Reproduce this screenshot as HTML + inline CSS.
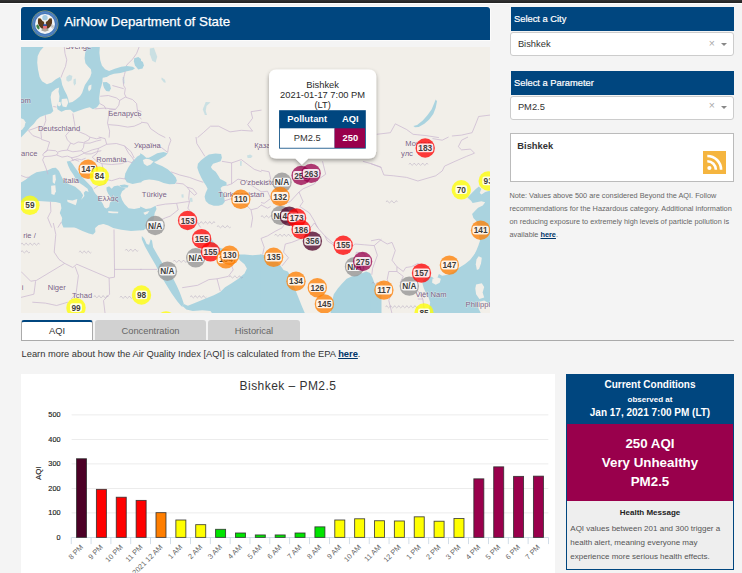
<!DOCTYPE html>
<html>
<head>
<meta charset="utf-8">
<title>AirNow Department of State</title>
<style>
*{box-sizing:border-box;margin:0;padding:0}
html,body{width:742px;height:573px;overflow:hidden}
body{background:#f4f4f4;font-family:"Liberation Sans",sans-serif;color:#333;position:relative}
.abs{position:absolute}
#topbar{left:0;top:0;width:742px;height:4px;background:#fff}
#topbar i{position:absolute;left:0;top:0;width:742px;height:2.7px;background:linear-gradient(#333,#222)}
#hdr{left:21.3px;top:7px;width:468.7px;height:33px;background:#00467f;border-radius:3px 3px 0 0;box-shadow:0 0 0 0.7px #fff}
#hdr .ttl{position:absolute;left:42.9px;top:6px;font-size:13.33px;color:#fff;white-space:nowrap;line-height:18px;-webkit-text-stroke:0.25px #fff}
#seal{left:9.5px;top:2.7px;width:28px;height:28px}
#map{left:21px;top:47px;width:469px;height:266px;background:#f2efe9;overflow:hidden}
.sbh{left:510.7px;width:222.9px;height:24.1px;-webkit-text-stroke:0.2px #fff;background:#00467f;color:#fff;font-size:9.33px;line-height:24px;padding-left:3.3px;white-space:nowrap}
.sel{left:510.3px;width:223.6px;height:24px;background:#fff;border:1px solid #ccc;border-radius:3px;font-size:9.33px;line-height:22px;padding-left:6.6px;color:#333}
.sel .x{position:absolute;left:197.5px;top:-1.5px;font-size:10.5px;color:#aaa}
.sel .ar{position:absolute;left:209.3px;top:9.5px;width:0;height:0;border-left:3px solid transparent;border-right:3px solid transparent;border-top:3px solid #888}
#citybox{left:510px;top:133px;width:224px;height:49px;background:#fff;border:1px solid #bbb}
#citybox b{position:absolute;left:6.3px;top:6px;font-size:9.33px;line-height:12px;color:#333}
#rss{left:703px;top:151px;width:23px;height:23px}
#note{left:509.5px;top:189px;width:230px;font-size:7.33px;line-height:13px;color:#666;white-space:nowrap}
#note a{color:#00366a;font-weight:bold;text-decoration:underline}
.tab{top:320px;height:21px;font-size:9.33px;line-height:23.4px;text-align:center;color:#666;background:#d1d1d1;border-radius:3px 3px 0 0}
#tab1{left:21px;width:72px;background:#fff;color:#333;border:1px solid #aaa;border-top:2px solid #00467f;border-bottom:none;line-height:19px}
#tab2{left:95px;width:111px}
#tab3{left:208px;width:92px}
#tabline{left:21px;top:340px;width:713px;height:1px;background:#aaa}
#learn{left:21.5px;top:348px;font-size:9.33px;line-height:12px;color:#333;white-space:nowrap}
#learn a{color:#00366a;font-weight:bold;text-decoration:underline}
#chart{left:21px;top:374px;width:534px;height:199px;background:#fff}
#cc{left:566px;top:374px;width:168px;height:196px;border:1px solid #00467f;background:#eee}
#cc .h{position:absolute;left:0;top:0;width:166px;height:49px;background:#00467f;color:#fff;text-align:center;font-weight:bold}
#cc .m{position:absolute;left:0;top:49px;width:166px;height:77px;background:#99004c;color:#fff;text-align:center;font-weight:bold;font-size:13.33px;line-height:19.2px;padding-top:9.7px}
#cc .hm{position:absolute;left:0;top:132.3px;width:166px;text-align:center;font-weight:bold;font-size:8px;line-height:12px;color:#222}
#cc .tx{position:absolute;left:3.3px;top:147px;font-size:8px;line-height:14px;color:#555;white-space:nowrap}
</style>
</head>
<body>
<div id="topbar" class="abs"><i></i></div>
<div id="hdr" class="abs">
  <svg id="seal" class="abs" viewBox="-14 -14 28 28">
    <g transform="scale(0.0628)">
    <circle r="214" fill="#a9ae60"/>
    <circle r="206" fill="#3f74b8"/>
    <circle r="183" fill="none" stroke="#8fb2dc" stroke-width="22" stroke-dasharray="8 8" opacity="0.5"/>
    <circle r="158" fill="#f3f5f7"/>
    <circle cx="0" cy="-100" r="43" fill="#a4cce3"/>
    <path d="M-12 -30 Q-40 -40 -70 -88 L-100 -96 Q-125 -60 -112 -10 Q-100 40 -60 68 L-26 80 L-14 40 Z" fill="#5b3b1d"/>
    <path d="M12 -30 Q40 -40 70 -88 L100 -96 Q125 -60 112 -10 Q100 40 60 68 L26 80 L14 40 Z" fill="#5b3b1d"/>
    <path d="M-80 -100 l10 22 l-22 -6 z M80 -100 l-10 22 l22 -6 z" fill="#d9c24c"/>
    <ellipse cx="0" cy="-40" rx="15" ry="20" fill="#f1efe8"/>
    <path d="M-45 70 L0 60 L45 70 L60 105 L0 125 L-60 105 Z" fill="#9a8c7e" opacity="0.75"/>
    <ellipse cx="-112" cy="48" rx="22" ry="40" transform="rotate(-25 -112 48)" fill="#3f8244"/>
    <path d="M95 15 L140 60 M105 5 L150 45 M88 28 L128 75" stroke="#999" stroke-width="10"/>
    <rect x="-29" y="4" width="58" height="27" fill="#2b4fa3"/>
    <path d="M-31 31 H31 V58 Q0 96 -31 58 Z" fill="#e86f7c"/>
    </g>
  </svg>
  <div class="ttl">AirNow Department of State</div>
</div>
<div id="map" class="abs">
<svg class="abs" style="left:0;top:0" width="469" height="266" viewBox="0 0 469 266" font-family="Liberation Sans, sans-serif">
<defs><filter id="bl" x="-2%" y="-2%" width="104%" height="104%"><feGaussianBlur stdDeviation="0.45"/></filter></defs><g filter="url(#bl)"><rect x="-5" y="-5" width="479" height="276" fill="#f2efe9"/>
<polygon points="0.0,0.0 22.6,0.0 19.1,4.0 16.7,8.9 16.2,15.4 17.0,22.6 18.6,29.9 21.0,34.3 25.9,37.2 30.7,35.6 34.8,32.3 38.8,29.9 40.1,32.3 41.2,38.0 43.3,42.9 45.8,47.7 47.2,51.8 48.0,55.8 51.4,55.0 55.0,52.6 59.0,49.3 61.1,46.1 62.3,42.4 63.9,38.0 66.6,34.0 69.2,29.9 70.5,25.9 69.9,22.3 67.1,19.4 64.4,16.2 63.6,11.3 64.2,5.7 66.0,0.0 78.8,0.0 78.4,5.7 79.2,12.9 80.9,18.6 84.1,22.3 88.1,23.9 93.8,21.8 100.3,19.7 105.9,19.1 111.6,19.7 114.0,21.3 111.6,23.0 105.9,24.3 99.5,25.9 93.0,26.7 88.6,28.3 85.7,29.9 82.2,31.5 81.4,34.8 80.5,38.8 79.2,42.4 78.8,46.1 78.1,51.8 78.8,56.6 76.0,60.2 72.0,62.3 68.7,60.2 63.9,61.5 58.2,63.4 52.6,65.5 49.3,62.8 44.5,63.1 40.4,64.7 36.4,62.3 35.9,58.2 38.0,54.2 38.5,49.3 37.5,44.5 38.2,40.4 34.8,41.7 30.7,45.3 29.6,50.1 30.4,55.8 31.5,60.7 32.3,63.9 29.9,66.6 24.3,67.9 19.1,69.9 15.8,72.8 12.9,76.8 8.9,80.5 7.3,82.8 4.5,85.7 1.9,88.6 -0.5,90.9 -0.8,86.5" fill="#aad3df"/>
<polygon points="81.7,35.3 85.7,34.9 89.0,37.5 89.9,41.4 88.3,44.6 85.2,44.0 83.1,41.1 82.2,38.2" fill="#aad3df"/>
<polygon points="113.2,11.3 117.3,10.0 120.0,12.1 120.0,21.8 117.3,22.6 114.0,18.6 112.9,14.6" fill="#aad3df"/>
<polygon points="45.3,29.9 48.5,27.8 51.4,29.1 50.5,33.2 47.2,34.8 45.3,33.2" fill="#aad3df" fill-opacity="0.55"/>
<polygon points="52.6,32.3 54.7,31.5 55.0,36.4 53.4,38.8 52.4,35.9" fill="#aad3df" fill-opacity="0.55"/>
<polygon points="101.6,29.9 103.2,29.9 103.7,36.4 101.9,36.4" fill="#aad3df" fill-opacity="0.55"/>
<polygon points="120.0,13.7 121.9,14.9 122.9,18.6 121.3,21.8 120.0,21.8" fill="#aad3df"/>
<polygon points="128.9,1.6 132.9,0.8 136.2,9.7 134.6,15.4 131.3,13.7 128.9,7.3" fill="#aad3df" fill-opacity="0.55"/>
<polygon points="140.7,30.4 143.9,32.7 144.9,35.6 143.0,35.6 140.4,32.3" fill="#aad3df" fill-opacity="0.55"/>
<polygon points="184.7,55.0 189.5,55.3 185.5,59.0 184.7,63.9 186.0,67.9 183.9,67.9 181.8,62.3" fill="#aad3df" fill-opacity="0.55"/>
<polygon points="392.4,78.9 396.1,78.0 401.8,73.6 406.6,67.9 410.7,62.3 413.4,55.8 414.7,52.6 416.0,54.2 414.7,60.7 412.3,67.1 408.2,72.5 403.4,76.8 397.7,80.1 394.0,80.2" fill="#aad3df"/>
<polygon points="-0.8,136.1 4.9,132.4 9.7,128.5 15.4,125.3 21.0,124.3 26.7,123.2 31.5,121.1 34.8,120.7 38.0,124.0 40.1,128.8 42.4,132.9 47.7,136.9 54.2,139.8 59.5,144.2 62.1,148.2 60.2,152.8 63.4,149.0 62.8,145.8 64.7,143.7 67.6,145.0 66.6,141.8 62.3,138.5 58.5,136.1 55.0,132.4 52.6,128.0 49.3,123.2 47.2,118.8 45.8,114.6 49.0,113.9 51.4,116.7 54.7,121.5 58.5,126.9 63.4,132.4 68.7,138.0 71.2,140.5 72.8,144.2 74.7,146.9 77.3,149.8 79.6,153.4 81.7,156.6 83.3,160.2 85.4,161.5 88.1,159.9 89.0,155.5 91.4,153.4 89.8,150.2 87.3,146.9 85.7,143.4 85.4,140.5 88.1,139.3 90.6,141.8 93.0,139.2 97.0,138.5 101.1,140.5 104.8,141.4 101.1,144.2 99.5,148.2 101.1,153.1 103.5,157.1 107.6,161.2 113.2,162.0 120.5,160.4 120.5,180.6 93.0,180.6 92.2,179.4 87.3,177.8 82.5,176.9 77.6,177.5 74.4,179.3 74.1,180.6 42.4,180.6 40.4,175.7 41.2,170.9 38.8,166.0 40.4,161.2 39.6,156.3 34.8,155.0 29.1,154.7 17.8,153.9 8.1,154.7 -0.8,155.5" fill="#aad3df"/>
<polygon points="120.5,107.0 116.4,109.4 111.6,114.3 107.6,119.9 104.3,126.4 103.5,131.2 105.9,135.3 111.6,136.9 116.4,136.1 120.5,135.3" fill="#aad3df"/>
<polygon points="98.3,138.2 103.5,137.5 107.6,138.5 106.7,140.5 101.1,140.8" fill="#aad3df"/>
<polygon points="119.2,106.2 121.9,107.8 125.2,110.7 127.8,110.7 131.3,109.1 136.2,106.2 142.6,104.9 146.7,106.2 144.3,109.1 139.4,111.8 135.4,114.3 132.9,115.1 135.4,116.7 141.0,119.1 146.7,122.3 151.5,126.4 154.8,130.4 155.9,133.7 154.0,136.9 148.3,137.2 142.6,136.1 137.8,134.0 132.9,132.9 128.1,132.4 123.2,133.3 119.2,135.3" fill="#aad3df"/>
<polygon points="183.9,110.2 187.9,107.5 194.4,106.5 200.1,107.0 200.9,110.7 199.6,114.3 196.0,115.6 192.0,116.7 189.9,119.9 191.2,122.3 194.7,124.8 197.3,128.8 199.2,132.1 201.7,133.3 205.4,135.3 205.7,138.5 201.7,139.3 199.6,140.9 200.5,144.2 202.5,146.6 203.3,150.7 203.8,154.7 201.7,157.6 197.6,158.7 192.8,158.7 187.9,157.1 184.7,153.9 183.6,149.8 184.7,145.8 186.6,141.8 185.0,138.5 182.8,135.3 180.2,130.4 177.9,125.6 176.3,120.7 176.9,116.7 179.8,113.5" fill="#aad3df"/>
<polygon points="225.9,108.6 229.2,107.5 231.6,109.1 230.0,111.0 226.7,111.0" fill="#aad3df" fill-opacity="0.55"/>
<polygon points="219.0,114.3 220.9,113.9 220.6,119.1 219.0,118.8" fill="#aad3df" fill-opacity="0.55"/>
<polygon points="119.2,159.5 124.9,162.0 129.7,161.2 134.6,158.7 135.5,162.0 133.7,166.0 132.9,170.9 132.1,175.7 131.3,180.6 119.2,180.6" fill="#aad3df"/>
<polygon points="168.5,151.1 171.1,150.8 171.8,154.4 169.5,155.3" fill="#aad3df" fill-opacity="0.55"/>
<polygon points="160.4,147.6 162.4,147.3 162.7,150.5 160.8,150.8" fill="#aad3df" fill-opacity="0.55"/>
<polygon points="470.5,143.2 464.2,145.1 460.6,147.6 458.7,145.9 460.3,142.0 457.9,139.6 454.8,142.0 450.1,146.7 446.4,150.6 450.1,153.8 451.6,156.1 455.5,155.3 460.3,154.2 464.2,155.3 461.8,158.5 457.1,160.8 453.2,164.8 451.1,167.1 452.4,171.0 455.5,174.2 457.1,179.7 457.9,189.1 459.0,193.8 457.4,198.5 455.5,203.2 453.2,208.0 451.1,211.1 470.5,211.1" fill="#aad3df"/>
<polygon points="42.4,175.2 48.5,177.6 55.0,180.9 61.5,184.1 67.9,186.5 72.0,187.6 74.4,184.9 74.1,180.9 77.6,177.9 82.5,176.8 87.3,178.4 92.2,180.9 100.3,182.8 110.0,184.1 120.5,183.3 120.5,175.2" fill="#aad3df"/>
<polygon points="120.8,188.9 123.2,191.4 125.7,197.0 128.1,197.8 129.7,192.2 131.0,193.5 132.1,200.3 136.2,207.5 141.0,215.6 145.9,222.9 151.5,230.2 155.9,239.1 158.8,245.5 161.2,252.0 162.9,256.9 160.4,259.3 156.4,254.4 150.7,246.4 145.1,237.5 139.4,227.8 134.6,218.1 128.9,208.3 124.0,199.5 120.8,192.2" fill="#aad3df"/>
<polygon points="160.4,259.3 162.9,256.9 166.9,258.8 175.0,255.6 184.7,251.5 192.8,248.3 199.2,245.1 204.1,240.2 210.6,236.2 217.0,232.1 223.5,226.5 225.9,221.6 223.5,217.2 219.0,213.5 217.0,210.8 217.8,207.5 223.5,207.5 231.6,208.3 240.5,207.5 240.5,266.6 191.2,266.6 189.5,264.1 181.5,263.3 171.8,264.1 165.3,262.5 162.4,259.8" fill="#aad3df"/>
<polygon points="183.9,184.9 188.7,189.7 192.8,195.4 197.6,200.3 204.1,202.7 210.6,205.1 215.4,207.5 213.0,210.0 207.3,212.4 200.9,210.8 196.0,208.3 193.6,204.3 189.5,198.6 185.5,193.0 183.1,188.1" fill="#aad3df"/>
<polygon points="119.2,175.2 126.5,175.2 125.7,180.9 122.4,183.3 119.2,183.3" fill="#aad3df"/>
<polygon points="239.2,207.5 244.9,208.3 249.7,210.8 256.2,214.8 259.7,218.9 262.6,222.9 266.7,224.5 269.9,229.4 272.3,237.5 274.8,243.9 278.0,252.0 281.2,260.1 284.0,266.6 239.2,266.6" fill="#aad3df"/>
<polygon points="309.5,266.6 309.9,262.5 311.2,253.6 312.8,247.2 316.8,241.5 320.9,236.7 325.7,231.8 330.6,229.4 335.4,228.1 340.3,226.5 345.1,224.5 349.2,226.1 351.6,231.0 353.5,236.2 356.4,240.7 360.5,245.5 360.5,266.6" fill="#aad3df"/>
<polygon points="470.5,185.7 464.8,188.9 461.6,194.6 458.0,200.6 453.8,207.1 449.0,212.9 444.1,217.1 438.5,220.5 432.8,224.5 426.3,227.8 421.2,228.7 417.9,226.9 416.6,230.2 413.9,232.0 410.7,229.7 405.8,230.3 402.1,233.4 401.4,236.2 402.7,241.0 405.0,245.9 407.6,250.7 409.2,255.6 408.2,260.4 406.6,266.6 470.5,266.6" fill="#aad3df"/>
<polygon points="349.2,248.0 352.4,250.4 355.7,253.6 356.5,258.5 354.9,263.3 354.0,266.6 349.2,266.6" fill="#aad3df"/>
<polygon points="0.0,71.2 2.9,72.5 4.5,75.2 3.6,79.2 1.3,82.5 0.0,83.3" fill="#f2efe9"/>
<polygon points="36.6,55.3 39.5,54.7 40.1,57.9 38.2,59.5 36.4,58.2" fill="#f2efe9"/>
<polygon points="40.8,52.1 46.1,51.4 47.2,55.8 45.3,60.2 41.7,59.5 40.4,55.8" fill="#f2efe9"/>
<polygon points="81.7,30.7 87.0,30.1 87.3,33.6 83.3,34.6 81.4,33.2" fill="#f2efe9"/>
<polygon points="67.6,38.8 70.5,37.5 70.2,42.1 67.9,44.5 67.0,41.7" fill="#f2efe9"/>
<polygon points="31.7,128.2 34.3,127.5 34.9,132.4 33.6,136.9 31.7,135.3" fill="#f2efe9"/>
<polygon points="30.1,138.8 34.3,138.2 34.9,144.2 33.3,147.9 30.4,146.9" fill="#f2efe9"/>
<polygon points="46.1,152.8 51.4,153.4 56.3,152.1 55.8,155.0 54.7,158.3 50.5,156.6 46.6,155.0" fill="#f2efe9"/>
<polygon points="87.3,164.1 92.2,164.4 97.4,164.7 97.0,166.3 91.4,166.3 87.3,165.7" fill="#f2efe9"/>
<polygon points="121.9,113.0 124.9,111.8 128.4,112.3 132.6,114.6 129.7,117.5 126.1,119.1 122.9,116.7" fill="#f2efe9"/>
<polygon points="122.3,165.7 125.7,164.4 128.4,164.1 126.8,166.3 124.0,168.0" fill="#f2efe9"/>
<polygon points="457.6,209.2 460.8,210.8 460.0,216.4 458.0,222.1 455.9,222.9 454.8,217.2 455.5,212.4" fill="#f2efe9"/>
<polygon points="411.5,231.8 416.3,230.2 419.9,231.8 418.7,235.8 414.7,237.8 411.1,235.8" fill="#f2efe9"/>
<polygon points="455.1,237.5 460.8,236.2 463.2,239.9 461.6,245.5 463.2,250.4 458.4,252.0 455.1,247.2 454.3,241.5" fill="#f2efe9"/>
<polygon points="456.7,255.2 463.2,253.6 468.9,256.9 470.5,266.6 460.0,266.6 457.6,261.7" fill="#f2efe9"/>
<polyline points="32.3,176.0 34.8,187.3 33.2,205.1 38.0,212.4 43.7,216.4 51.8,220.5 55.8,217.2 88.1,231.0 93.5,230.2 93.5,222.1 93.0,182.5" fill="none" stroke="#c9b5cf" stroke-width="0.9" stroke-opacity="0.8" stroke-linejoin="round"/>
<polyline points="43.7,216.4 15.4,233.4 9.7,234.2 0.0,224.5" fill="none" stroke="#c9b5cf" stroke-width="0.9" stroke-opacity="0.8" stroke-linejoin="round"/>
<polyline points="93.5,222.4 120.5,222.4" fill="none" stroke="#c9b5cf" stroke-width="0.9" stroke-opacity="0.8" stroke-linejoin="round"/>
<polyline points="54.2,219.7 57.4,228.6 55.0,247.2 50.1,252.0" fill="none" stroke="#c9b5cf" stroke-width="0.9" stroke-opacity="0.8" stroke-linejoin="round"/>
<polyline points="88.1,231.0 88.6,247.2 82.5,253.6 84.1,266.6" fill="none" stroke="#c9b5cf" stroke-width="0.9" stroke-opacity="0.8" stroke-linejoin="round"/>
<polyline points="0.0,250.4 12.9,247.2 14.6,234.2" fill="none" stroke="#c9b5cf" stroke-width="0.9" stroke-opacity="0.8" stroke-linejoin="round"/>
<polyline points="11.3,255.2 24.3,256.1 35.6,258.5 46.9,255.2" fill="none" stroke="#c9b5cf" stroke-width="0.9" stroke-opacity="0.8" stroke-linejoin="round"/>
<polyline points="161.2,240.7 176.6,238.3 187.9,232.6 196.0,231.8 207.3,229.4 212.2,222.9 209.8,216.4" fill="none" stroke="#c9b5cf" stroke-width="0.9" stroke-opacity="0.8" stroke-linejoin="round"/>
<polyline points="196.0,231.8 199.2,243.9" fill="none" stroke="#c9b5cf" stroke-width="0.9" stroke-opacity="0.8" stroke-linejoin="round"/>
<polyline points="119.2,222.4 136.2,222.4" fill="none" stroke="#c9b5cf" stroke-width="0.9" stroke-opacity="0.8" stroke-linejoin="round"/>
<polyline points="43.3,0.0 44.0,6.5 45.8,12.9 44.5,19.4 41.7,25.9 39.9,30.7" fill="none" stroke="#c9b5cf" stroke-width="0.9" stroke-opacity="0.8" stroke-linejoin="round"/>
<polyline points="118.1,0.0 115.6,6.5 111.6,12.1 106.7,17.0 105.1,19.1" fill="none" stroke="#c9b5cf" stroke-width="0.9" stroke-opacity="0.8" stroke-linejoin="round"/>
<polyline points="104.3,24.3 103.5,27.5 102.2,32.3 102.7,38.8 104.3,41.2 103.5,46.9 105.1,50.1" fill="none" stroke="#c9b5cf" stroke-width="0.9" stroke-opacity="0.8" stroke-linejoin="round"/>
<polyline points="91.4,38.5 97.0,40.1 102.7,41.7" fill="none" stroke="#c9b5cf" stroke-width="0.9" stroke-opacity="0.8" stroke-linejoin="round"/>
<polyline points="79.2,49.3 87.3,48.5 95.4,50.9 98.7,53.4 104.3,50.1 111.6,52.6 115.6,56.6 116.4,63.1 120.5,64.7" fill="none" stroke="#c9b5cf" stroke-width="0.9" stroke-opacity="0.8" stroke-linejoin="round"/>
<polyline points="98.7,53.4 97.8,58.2 94.6,62.3" fill="none" stroke="#c9b5cf" stroke-width="0.9" stroke-opacity="0.8" stroke-linejoin="round"/>
<polyline points="73.6,61.9 84.1,61.1 94.6,62.3 88.1,63.1 87.3,71.2 86.5,76.0 88.6,84.1 88.1,90.6" fill="none" stroke="#c9b5cf" stroke-width="0.9" stroke-opacity="0.8" stroke-linejoin="round"/>
<polyline points="78.8,56.6 83.3,59.0 84.9,62.3" fill="none" stroke="#c9b5cf" stroke-width="0.9" stroke-opacity="0.8" stroke-linejoin="round"/>
<polyline points="87.3,77.6 97.0,78.4 106.7,80.1 113.2,79.2 120.5,76.0" fill="none" stroke="#c9b5cf" stroke-width="0.9" stroke-opacity="0.8" stroke-linejoin="round"/>
<polyline points="116.4,63.1 117.3,69.5 120.5,72.0" fill="none" stroke="#c9b5cf" stroke-width="0.9" stroke-opacity="0.8" stroke-linejoin="round"/>
<polyline points="120.0,75.2 126.5,76.0 129.7,81.7 137.8,87.3 144.3,90.6" fill="none" stroke="#c9b5cf" stroke-width="0.9" stroke-opacity="0.8" stroke-linejoin="round"/>
<polyline points="176.6,90.6 182.3,85.7 189.5,79.2 197.6,79.2 209.0,84.9 220.3,83.3 231.6,84.1 226.7,77.6 231.6,71.2 230.0,64.7 240.5,63.1" fill="none" stroke="#c9b5cf" stroke-width="0.9" stroke-opacity="0.8" stroke-linejoin="round"/>
<polyline points="355.7,87.3 369.4,85.7 374.3,76.8 385.6,82.5 392.1,87.3 405.0,88.6 417.9,90.6" fill="none" stroke="#c9b5cf" stroke-width="0.9" stroke-opacity="0.8" stroke-linejoin="round"/>
<polyline points="470.5,67.9 457.6,69.5 455.1,76.0 451.1,85.7 440.6,88.1 430.9,89.0" fill="none" stroke="#c9b5cf" stroke-width="0.9" stroke-opacity="0.8" stroke-linejoin="round"/>
<polyline points="0.0,128.5 4.9,130.4 8.9,130.1" fill="none" stroke="#c9b5cf" stroke-width="0.9" stroke-opacity="0.8" stroke-linejoin="round"/>
<polyline points="50.1,111.0 56.6,109.4 63.1,106.2 71.2,102.9 77.6,101.3 76.0,106.2 71.2,110.2 76.0,114.3 80.9,116.7 90.6,117.5 100.3,116.7 106.7,114.3 111.6,115.9" fill="none" stroke="#c9b5cf" stroke-width="0.9" stroke-opacity="0.8" stroke-linejoin="round"/>
<polyline points="49.3,114.3 53.4,112.6 58.2,114.3" fill="none" stroke="#c9b5cf" stroke-width="0.9" stroke-opacity="0.8" stroke-linejoin="round"/>
<polyline points="77.6,101.3 85.7,97.3 95.4,96.5 103.5,98.9 107.6,106.2 111.6,111.0 113.2,114.3" fill="none" stroke="#c9b5cf" stroke-width="0.9" stroke-opacity="0.8" stroke-linejoin="round"/>
<polyline points="103.5,98.9 110.0,104.6 113.2,111.0" fill="none" stroke="#c9b5cf" stroke-width="0.9" stroke-opacity="0.8" stroke-linejoin="round"/>
<polyline points="85.7,97.3 84.1,91.6 77.6,90.0" fill="none" stroke="#c9b5cf" stroke-width="0.9" stroke-opacity="0.8" stroke-linejoin="round"/>
<polyline points="80.9,116.7 82.5,124.0 84.1,132.1 90.6,133.7 98.7,131.2 105.1,132.1" fill="none" stroke="#c9b5cf" stroke-width="0.9" stroke-opacity="0.8" stroke-linejoin="round"/>
<polyline points="72.8,141.8 77.6,138.5 84.1,136.9 84.1,132.1" fill="none" stroke="#c9b5cf" stroke-width="0.9" stroke-opacity="0.8" stroke-linejoin="round"/>
<polyline points="29.4,154.7 29.9,164.4 26.7,170.9 30.7,180.6" fill="none" stroke="#c9b5cf" stroke-width="0.9" stroke-opacity="0.8" stroke-linejoin="round"/>
<polyline points="40.4,174.9 36.9,180.6" fill="none" stroke="#c9b5cf" stroke-width="0.9" stroke-opacity="0.8" stroke-linejoin="round"/>
<polyline points="146.7,105.4 147.5,99.7 149.9,93.2 148.3,90.0" fill="none" stroke="#c9b5cf" stroke-width="0.9" stroke-opacity="0.8" stroke-linejoin="round"/>
<polyline points="149.9,124.8 158.8,128.0 168.5,130.4 175.0,132.9 182.3,135.3" fill="none" stroke="#c9b5cf" stroke-width="0.9" stroke-opacity="0.8" stroke-linejoin="round"/>
<polyline points="154.8,136.1 162.1,136.9 166.1,140.1 168.5,143.4 167.7,151.5 168.5,154.7 166.9,161.2 171.8,167.6 175.0,174.1 179.8,180.6" fill="none" stroke="#c9b5cf" stroke-width="0.9" stroke-opacity="0.8" stroke-linejoin="round"/>
<polyline points="166.1,140.1 171.8,141.8 175.8,146.6 173.4,148.2 168.5,143.4" fill="none" stroke="#c9b5cf" stroke-width="0.9" stroke-opacity="0.8" stroke-linejoin="round"/>
<polyline points="135.4,158.7 144.3,157.1 155.6,156.3 166.1,154.7 168.5,154.7" fill="none" stroke="#c9b5cf" stroke-width="0.9" stroke-opacity="0.8" stroke-linejoin="round"/>
<polyline points="155.6,156.3 157.2,162.8 149.1,169.2 144.3,170.9 137.8,174.1" fill="none" stroke="#c9b5cf" stroke-width="0.9" stroke-opacity="0.8" stroke-linejoin="round"/>
<polyline points="175.0,90.0 175.8,96.5 179.8,102.9 183.9,109.4" fill="none" stroke="#c9b5cf" stroke-width="0.9" stroke-opacity="0.8" stroke-linejoin="round"/>
<polyline points="200.9,114.3 210.6,115.9 220.3,112.6 233.2,122.3 240.5,124.8" fill="none" stroke="#c9b5cf" stroke-width="0.9" stroke-opacity="0.8" stroke-linejoin="round"/>
<polyline points="210.6,115.9 210.6,136.9 205.7,138.5" fill="none" stroke="#c9b5cf" stroke-width="0.9" stroke-opacity="0.8" stroke-linejoin="round"/>
<polyline points="210.6,136.9 217.0,132.1 223.5,133.7 233.2,140.1 240.5,145.0" fill="none" stroke="#c9b5cf" stroke-width="0.9" stroke-opacity="0.8" stroke-linejoin="round"/>
<polyline points="203.3,153.9 210.6,151.5 218.7,154.7 226.7,159.5 230.0,162.8 231.6,170.9 230.0,180.6" fill="none" stroke="#c9b5cf" stroke-width="0.9" stroke-opacity="0.8" stroke-linejoin="round"/>
<polyline points="230.0,162.8 236.4,161.2 240.5,157.9" fill="none" stroke="#c9b5cf" stroke-width="0.9" stroke-opacity="0.8" stroke-linejoin="round"/>
<polyline points="120.0,99.7 126.5,101.3 132.9,98.1 139.4,99.7 146.7,105.4" fill="none" stroke="#c9b5cf" stroke-width="0.9" stroke-opacity="0.8" stroke-linejoin="round"/>
<polyline points="240.0,123.2 248.1,124.8 249.7,132.1 243.2,136.1 240.0,136.9" fill="none" stroke="#c9b5cf" stroke-width="0.9" stroke-opacity="0.8" stroke-linejoin="round"/>
<polyline points="301.5,114.3 304.7,127.2 296.6,132.9 293.4,136.9 282.1,141.8 278.0,145.0 282.1,154.7 278.8,159.5 288.5,166.0 293.4,174.1 296.6,180.6" fill="none" stroke="#c9b5cf" stroke-width="0.9" stroke-opacity="0.8" stroke-linejoin="round"/>
<polyline points="240.0,145.0 246.5,144.2 249.7,151.5 243.2,156.3 240.0,155.5" fill="none" stroke="#c9b5cf" stroke-width="0.9" stroke-opacity="0.8" stroke-linejoin="round"/>
<polyline points="249.7,151.5 259.4,157.9 269.1,154.7 278.0,145.0" fill="none" stroke="#c9b5cf" stroke-width="0.9" stroke-opacity="0.8" stroke-linejoin="round"/>
<polyline points="341.9,114.3 350.0,116.7 360.5,120.7" fill="none" stroke="#c9b5cf" stroke-width="0.9" stroke-opacity="0.8" stroke-linejoin="round"/>
<polyline points="240.0,157.9 246.5,161.2 249.7,159.5" fill="none" stroke="#c9b5cf" stroke-width="0.9" stroke-opacity="0.8" stroke-linejoin="round"/>
<polyline points="350.0,116.7 359.7,119.9 362.9,128.0 372.6,128.8 385.6,130.4 396.9,134.0 414.7,128.8 421.2,124.0 423.6,119.1 434.1,114.3 445.4,109.4 453.5,106.2 449.5,102.1 440.6,102.9 437.3,99.7 440.6,93.2 447.0,90.0" fill="none" stroke="#c9b5cf" stroke-width="0.9" stroke-opacity="0.8" stroke-linejoin="round"/>
<polyline points="411.5,91.6 421.2,93.2 427.6,90.0" fill="none" stroke="#c9b5cf" stroke-width="0.9" stroke-opacity="0.8" stroke-linejoin="round"/>
<polyline points="278.8,192.2 270.7,195.4 264.3,197.0 262.6,205.1 267.5,210.8 261.0,218.9" fill="none" stroke="#c9b5cf" stroke-width="0.9" stroke-opacity="0.8" stroke-linejoin="round"/>
<polyline points="240.0,191.4 246.5,188.9 254.6,184.1 261.0,180.9 264.3,176.0" fill="none" stroke="#c9b5cf" stroke-width="0.9" stroke-opacity="0.8" stroke-linejoin="round"/>
<polyline points="240.0,191.4 243.2,200.3 241.6,207.5" fill="none" stroke="#c9b5cf" stroke-width="0.9" stroke-opacity="0.8" stroke-linejoin="round"/>
<polyline points="293.4,176.0 298.2,182.5 303.9,188.9 311.2,195.4 320.9,199.5 330.6,200.3 333.8,197.0 343.5,197.8 353.2,198.6 360.5,192.2" fill="none" stroke="#c9b5cf" stroke-width="0.9" stroke-opacity="0.8" stroke-linejoin="round"/>
<polyline points="303.9,188.9 306.3,193.8 316.0,200.3 327.3,204.3 330.6,200.3" fill="none" stroke="#c9b5cf" stroke-width="0.9" stroke-opacity="0.8" stroke-linejoin="round"/>
<polyline points="335.4,205.1 343.5,206.7 345.1,213.2 343.5,222.9" fill="none" stroke="#c9b5cf" stroke-width="0.9" stroke-opacity="0.8" stroke-linejoin="round"/>
<polyline points="335.4,205.1 333.8,214.8 337.0,224.5" fill="none" stroke="#c9b5cf" stroke-width="0.9" stroke-opacity="0.8" stroke-linejoin="round"/>
<polyline points="353.2,198.6 356.4,208.3 351.6,221.3 350.8,227.8" fill="none" stroke="#c9b5cf" stroke-width="0.9" stroke-opacity="0.8" stroke-linejoin="round"/>
<polyline points="278.8,192.2 285.3,185.7 293.4,176.0" fill="none" stroke="#c9b5cf" stroke-width="0.9" stroke-opacity="0.8" stroke-linejoin="round"/>
<polyline points="350.0,193.8 358.1,192.2 366.2,197.0 371.0,195.4 374.3,203.5 371.0,213.2 375.9,219.7 382.3,224.5 384.8,220.5 390.4,219.7 396.9,216.4 403.4,219.7" fill="none" stroke="#c9b5cf" stroke-width="0.9" stroke-opacity="0.8" stroke-linejoin="round"/>
<polyline points="375.9,224.5 382.3,229.4 379.1,235.8 396.9,243.9 401.8,252.0 403.4,263.3" fill="none" stroke="#c9b5cf" stroke-width="0.9" stroke-opacity="0.8" stroke-linejoin="round"/>
<polyline points="367.8,224.5 366.2,232.6 371.0,243.9 367.8,253.6 371.0,266.6" fill="none" stroke="#c9b5cf" stroke-width="0.9" stroke-opacity="0.8" stroke-linejoin="round"/>
<polyline points="375.9,219.7 375.9,224.5 367.8,224.5" fill="none" stroke="#c9b5cf" stroke-width="0.9" stroke-opacity="0.8" stroke-linejoin="round"/>
<polyline points="396.9,252.0 401.8,252.0" fill="none" stroke="#c9b5cf" stroke-width="0.9" stroke-opacity="0.8" stroke-linejoin="round"/>
<polyline points="24.3,68.1 24.8,73.5 23.2,78.3 20.5,81.6 19.9,84.8 20.5,91.8" fill="none" stroke="#c9b5cf" stroke-width="0.9" stroke-opacity="0.8" stroke-linejoin="round"/>
<polyline points="7.5,83.4 14.0,81.2 17.8,79.7 20.5,81.6" fill="none" stroke="#c9b5cf" stroke-width="0.9" stroke-opacity="0.8" stroke-linejoin="round"/>
<polyline points="7.5,83.7 11.9,88.6 19.4,91.3 20.5,92.4 28.6,95.0 27.0,100.4 25.9,103.7 23.2,105.8" fill="none" stroke="#c9b5cf" stroke-width="0.9" stroke-opacity="0.8" stroke-linejoin="round"/>
<polyline points="23.2,105.8 27.0,103.1 34.5,103.7 37.2,105.8 35.6,108.0 30.2,109.1 23.2,109.6 21.6,108.0 23.2,105.8" fill="none" stroke="#c9b5cf" stroke-width="0.9" stroke-opacity="0.8" stroke-linejoin="round"/>
<polyline points="51.8,66.5 52.8,72.4 53.9,78.3 52.3,81.0 47.4,85.3 44.7,88.6 46.4,92.9 49.6,96.1 52.8,97.2 57.1,95.0 62.5,95.6 67.9,92.9 69.0,90.2 64.7,87.5 59.3,85.3 52.3,81.0" fill="none" stroke="#c9b5cf" stroke-width="0.9" stroke-opacity="0.8" stroke-linejoin="round"/>
<polyline points="49.6,96.1 47.4,100.4 46.4,103.1 41.0,103.7 37.2,104.8" fill="none" stroke="#c9b5cf" stroke-width="0.9" stroke-opacity="0.8" stroke-linejoin="round"/>
<polyline points="46.4,103.1 51.8,104.8 60.4,103.7 62.5,100.4 63.1,96.1" fill="none" stroke="#c9b5cf" stroke-width="0.9" stroke-opacity="0.8" stroke-linejoin="round"/>
<polyline points="63.1,96.1 69.0,96.1 75.5,94.0 80.3,92.9" fill="none" stroke="#c9b5cf" stroke-width="0.9" stroke-opacity="0.8" stroke-linejoin="round"/>
<polyline points="69.0,90.2 75.5,91.8 80.3,90.7" fill="none" stroke="#c9b5cf" stroke-width="0.9" stroke-opacity="0.8" stroke-linejoin="round"/>
<polyline points="32.3,59.5 35.6,60.1" fill="none" stroke="#c9b5cf" stroke-width="0.9" stroke-opacity="0.8" stroke-linejoin="round"/>
<polyline points="23.2,109.6 21.6,112.9 23.2,116.6 25.3,122.0 27.0,127.4" fill="none" stroke="#c9b5cf" stroke-width="0.9" stroke-opacity="0.8" stroke-linejoin="round"/>
<polyline points="35.6,108.0 41.0,110.1 46.4,109.1 50.7,110.7 51.8,113.4" fill="none" stroke="#c9b5cf" stroke-width="0.9" stroke-opacity="0.8" stroke-linejoin="round"/>
<polyline points="60.4,103.7 64.7,106.9 70.1,106.9 75.5,104.8 80.3,103.7" fill="none" stroke="#c9b5cf" stroke-width="0.9" stroke-opacity="0.8" stroke-linejoin="round"/>
<polyline points="51.8,113.4 56.1,111.8 60.4,112.8 64.7,111.2" fill="none" stroke="#c9b5cf" stroke-width="0.9" stroke-opacity="0.8" stroke-linejoin="round"/>
</g>
<text x="57.4" y="2.3" text-anchor="middle" font-size="7.6" fill="#705681" fill-opacity="0.95" stroke="#f2efe9" stroke-width="0.8" stroke-opacity="0.6" paint-order="stroke" letter-spacing="0">Sverige</text>
<text x="9.9" y="56.3" text-anchor="end" font-size="7.6" fill="#705681" fill-opacity="0.95" stroke="#f2efe9" stroke-width="0.8" stroke-opacity="0.6" paint-order="stroke" letter-spacing="0">om</text>
<text x="38.0" y="84.3" text-anchor="middle" font-size="7.6" fill="#705681" fill-opacity="0.95" stroke="#f2efe9" stroke-width="0.8" stroke-opacity="0.6" paint-order="stroke" letter-spacing="0">Deutschland</text>
<text x="87.3" y="69.2" text-anchor="start" font-size="7.6" fill="#705681" fill-opacity="0.95" stroke="#f2efe9" stroke-width="0.8" stroke-opacity="0.6" paint-order="stroke" letter-spacing="0">Беларусь</text>
<text x="16.4" y="109.1" text-anchor="end" font-size="7.6" fill="#705681" fill-opacity="0.95" stroke="#f2efe9" stroke-width="0.8" stroke-opacity="0.6" paint-order="stroke" letter-spacing="0">rance</text>
<text x="75.2" y="114.7" text-anchor="start" font-size="7.6" fill="#705681" fill-opacity="0.95" stroke="#f2efe9" stroke-width="0.8" stroke-opacity="0.6" paint-order="stroke" letter-spacing="0">România</text>
<text x="42.0" y="135.8" text-anchor="start" font-size="7.6" fill="#705681" fill-opacity="0.95" stroke="#f2efe9" stroke-width="0.8" stroke-opacity="0.6" paint-order="stroke" letter-spacing="0">Italia</text>
<text x="76.8" y="154.4" text-anchor="start" font-size="7.6" fill="#705681" fill-opacity="0.95" stroke="#f2efe9" stroke-width="0.8" stroke-opacity="0.6" paint-order="stroke" letter-spacing="0">Ελλάς</text>
<text x="113.0" y="101.4" text-anchor="start" font-size="7.6" fill="#705681" fill-opacity="0.95" stroke="#f2efe9" stroke-width="0.8" stroke-opacity="0.6" paint-order="stroke" letter-spacing="0">Україна</text>
<text x="120.8" y="150.3" text-anchor="start" font-size="7.6" fill="#705681" fill-opacity="0.95" stroke="#f2efe9" stroke-width="0.8" stroke-opacity="0.6" paint-order="stroke" letter-spacing="0">Türkiye</text>
<text x="233.2" y="100.9" text-anchor="start" font-size="7.6" fill="#705681" fill-opacity="0.95" stroke="#f2efe9" stroke-width="0.8" stroke-opacity="0.6" paint-order="stroke" letter-spacing="0">Қазақстан</text>
<text x="219.0" y="138.2" text-anchor="start" font-size="7.6" fill="#705681" fill-opacity="0.95" stroke="#f2efe9" stroke-width="0.8" stroke-opacity="0.6" paint-order="stroke" letter-spacing="0">O'zbekiston</text>
<text x="197.3" y="150.3" text-anchor="start" font-size="7.6" fill="#705681" fill-opacity="0.95" stroke="#f2efe9" stroke-width="0.8" stroke-opacity="0.6" paint-order="stroke" letter-spacing="0">Türkmenistan</text>
<text x="397.3" y="98.6" text-anchor="middle" font-size="7.6" fill="#705681" fill-opacity="0.95" stroke="#f2efe9" stroke-width="0.8" stroke-opacity="0.6" paint-order="stroke" letter-spacing="0">Монгол</text>
<text x="380.0" y="109.1" text-anchor="start" font-size="7.6" fill="#705681" fill-opacity="0.95" stroke="#f2efe9" stroke-width="0.8" stroke-opacity="0.6" paint-order="stroke" letter-spacing="0">улс</text>
<text x="26.7" y="243.3" text-anchor="start" font-size="7.6" fill="#705681" fill-opacity="0.95" stroke="#f2efe9" stroke-width="0.8" stroke-opacity="0.6" paint-order="stroke" letter-spacing="0">Niger</text>
<text x="51.0" y="251.2" text-anchor="start" font-size="7.6" fill="#705681" fill-opacity="0.95" stroke="#f2efe9" stroke-width="0.8" stroke-opacity="0.6" paint-order="stroke" letter-spacing="0">Tchad</text>
<text x="14.8" y="190.5" text-anchor="end" font-size="7.6" fill="#705681" fill-opacity="0.95" stroke="#f2efe9" stroke-width="0.8" stroke-opacity="0.6" paint-order="stroke" letter-spacing="0">rie /</text>
<text x="0.8" y="242.8" text-anchor="start" font-size="7.6" fill="#705681" fill-opacity="0.95" stroke="#f2efe9" stroke-width="0.8" stroke-opacity="0.6" paint-order="stroke" letter-spacing="0">i</text>
<text x="394.5" y="250.1" text-anchor="start" font-size="7.6" fill="#705681" fill-opacity="0.95" stroke="#f2efe9" stroke-width="0.8" stroke-opacity="0.6" paint-order="stroke" letter-spacing="0">Việt Nam</text>
<text x="444.6" y="259.8" text-anchor="start" font-size="7.6" fill="#705681" fill-opacity="0.95" stroke="#f2efe9" stroke-width="0.8" stroke-opacity="0.6" paint-order="stroke" letter-spacing="0">Philippines</text>
<path d="M72.8 250.0 q1.04 -3.0 2.07 0 q1.04 1.6 2.07 0 q1.04 -3.0 2.07 0 q1.04 1.6 2.07 0 q1.04 -3.0 2.07 0 q1.04 1.6 2.07 0 q1.04 -3.0 2.07 0" fill="none" stroke="#9f8fb0" stroke-width="0.7" stroke-opacity="0.5"/>
<path d="M58.2 205.3 q1.02 -3.0 2.03 0 q1.02 1.6 2.03 0 q1.02 -3.0 2.03 0 q1.02 1.6 2.03 0 q1.02 -3.0 2.03 0 q1.02 1.6 2.03 0" fill="none" stroke="#9f8fb0" stroke-width="0.7" stroke-opacity="0.5"/>
<path d="M104.3 203.5 q1.08 -3.0 2.17 0 q1.08 1.6 2.17 0 q1.08 -3.0 2.17 0 q1.08 1.6 2.17 0 q1.08 -3.0 2.17 0 q1.08 1.6 2.17 0" fill="none" stroke="#9f8fb0" stroke-width="0.7" stroke-opacity="0.5"/>
<path d="M0.0 197.4 q1.03 -3.0 2.06 0 q1.03 1.6 2.06 0 q1.03 -3.0 2.06 0 q1.03 1.6 2.06 0 q1.03 -3.0 2.06 0 q1.03 1.6 2.06 0 q1.03 -3.0 2.06 0 q1.03 1.6 2.06 0 q1.03 -3.0 2.06 0" fill="none" stroke="#9f8fb0" stroke-width="0.7" stroke-opacity="0.5"/>
<path d="M0.0 205.1 q1.12 -3.0 2.25 0 q1.12 1.6 2.25 0 q1.12 -3.0 2.25 0 q1.12 1.6 2.25 0" fill="none" stroke="#9f8fb0" stroke-width="0.7" stroke-opacity="0.5"/>
<path d="M99.0 250.5 q1.05 -3.0 2.10 0 q1.05 1.6 2.10 0 q1.05 -3.0 2.10 0 q1.05 1.6 2.10 0 q1.05 -3.0 2.10 0 q1.05 1.6 2.10 0" fill="none" stroke="#9f8fb0" stroke-width="0.7" stroke-opacity="0.5"/>
<path d="M196.0 180.0 q1.15 -3.0 2.30 0 q1.15 1.6 2.30 0 q1.15 -3.0 2.30 0 q1.15 1.6 2.30 0 q1.15 -3.0 2.30 0 q1.15 1.6 2.30 0" fill="none" stroke="#9f8fb0" stroke-width="0.7" stroke-opacity="0.5"/>
<path d="M152.3 214.5 q1.14 -3.0 2.28 0 q1.14 1.6 2.28 0 q1.14 -3.0 2.28 0 q1.14 1.6 2.28 0 q1.14 -3.0 2.28 0 q1.14 1.6 2.28 0" fill="none" stroke="#9f8fb0" stroke-width="0.7" stroke-opacity="0.5"/>
<path d="M208.1 230.2 q1.15 -3.0 2.30 0 q1.15 1.6 2.30 0 q1.15 -3.0 2.30 0 q1.15 1.6 2.30 0 q1.15 -3.0 2.30 0 q1.15 1.6 2.30 0" fill="none" stroke="#9f8fb0" stroke-width="0.7" stroke-opacity="0.5"/>
<path d="M169.3 250.1 q1.01 -3.0 2.02 0 q1.01 1.6 2.02 0 q1.01 -3.0 2.02 0 q1.01 1.6 2.02 0 q1.01 -3.0 2.02 0 q1.01 1.6 2.02 0 q1.01 -3.0 2.02 0 q1.01 1.6 2.02 0" fill="none" stroke="#9f8fb0" stroke-width="0.7" stroke-opacity="0.5"/>
<path d="M253.7 188.5 q1.06 -3.0 2.12 0 q1.06 1.6 2.12 0 q1.06 -3.0 2.12 0 q1.06 1.6 2.12 0 q1.06 -3.0 2.12 0 q1.06 1.6 2.12 0 q1.06 -3.0 2.12 0 q1.06 1.6 2.12 0" fill="none" stroke="#9f8fb0" stroke-width="0.7" stroke-opacity="0.5"/>
<path d="M240.0 170.0 q1.10 -3.0 2.20 0 q1.10 1.6 2.20 0 q1.10 -3.0 2.20 0 q1.10 1.6 2.20 0 q1.10 -3.0 2.20 0" fill="none" stroke="#9f8fb0" stroke-width="0.7" stroke-opacity="0.5"/>
<path d="M364.6 260.1 q1.01 -3.0 2.02 0 q1.01 1.6 2.02 0 q1.01 -3.0 2.02 0 q1.01 1.6 2.02 0 q1.01 -3.0 2.02 0 q1.01 1.6 2.02 0 q1.01 -3.0 2.02 0 q1.01 1.6 2.02 0 q1.01 -3.0 2.02 0 q1.01 1.6 2.02 0 q1.01 -3.0 2.02 0 q1.01 1.6 2.02 0 q1.01 -3.0 2.02 0 q1.01 1.6 2.02 0 q1.01 -3.0 2.02 0 q1.01 1.6 2.02 0" fill="none" stroke="#9f8fb0" stroke-width="0.7" stroke-opacity="0.5"/>
<path d="M365.0 155.1 q1.15 -3.0 2.30 0 q1.15 1.6 2.30 0 q1.15 -3.0 2.30 0 q1.15 1.6 2.30 0 q1.15 -3.0 2.30 0" fill="none" stroke="#9f8fb0" stroke-width="0.7" stroke-opacity="0.5"/>
<path d="M388.0 117.5 q1.06 -3.0 2.11 0 q1.06 1.6 2.11 0 q1.06 -3.0 2.11 0 q1.06 1.6 2.11 0 q1.06 -3.0 2.11 0 q1.06 1.6 2.11 0 q1.06 -3.0 2.11 0 q1.06 1.6 2.11 0 q1.06 -3.0 2.11 0" fill="none" stroke="#9f8fb0" stroke-width="0.7" stroke-opacity="0.5"/>
<path d="M175.0 176.0 q1.06 -3.0 2.11 0 q1.06 1.6 2.11 0 q1.06 -3.0 2.11 0 q1.06 1.6 2.11 0 q1.06 -3.0 2.11 0 q1.06 1.6 2.11 0 q1.06 -3.0 2.11 0 q1.06 1.6 2.11 0 q1.06 -3.0 2.11 0" fill="none" stroke="#9f8fb0" stroke-width="0.7" stroke-opacity="0.5"/>
<path d="M351.0 236.5 q1.08 -3.0 2.17 0 q1.08 1.6 2.17 0 q1.08 -3.0 2.17 0 q1.08 1.6 2.17 0 q1.08 -3.0 2.17 0 q1.08 1.6 2.17 0" fill="none" stroke="#9f8fb0" stroke-width="0.7" stroke-opacity="0.5"/>
<circle cx="67.1" cy="122.3" r="9.7" fill="#ff7e00" fill-opacity="0.76"/>
<rect x="58.9" y="117.8" width="16.4" height="8.8" rx="2.4" fill="#fff" fill-opacity="0.88"/>
<text x="67.1" y="125.4" text-anchor="middle" font-size="8.3" font-weight="bold" fill="#2b2b2b" fill-opacity="0.92">147</text>
<circle cx="78.4" cy="129.3" r="9.7" fill="#ffff00" fill-opacity="0.76"/>
<rect x="72.5" y="124.8" width="11.8" height="8.8" rx="2.4" fill="#fff" fill-opacity="0.88"/>
<text x="78.4" y="132.4" text-anchor="middle" font-size="8.3" font-weight="bold" fill="#2b2b2b" fill-opacity="0.92">84</text>
<circle cx="8.9" cy="158.3" r="9.7" fill="#ffff00" fill-opacity="0.76"/>
<rect x="3.0" y="153.8" width="11.8" height="8.8" rx="2.4" fill="#fff" fill-opacity="0.88"/>
<text x="8.9" y="161.4" text-anchor="middle" font-size="8.3" font-weight="bold" fill="#2b2b2b" fill-opacity="0.92">59</text>
<circle cx="219.8" cy="152.3" r="9.7" fill="#ff7e00" fill-opacity="0.76"/>
<rect x="211.6" y="147.8" width="16.4" height="8.8" rx="2.4" fill="#fff" fill-opacity="0.88"/>
<text x="219.8" y="155.4" text-anchor="middle" font-size="8.3" font-weight="bold" fill="#2b2b2b" fill-opacity="0.92">110</text>
<circle cx="134.2" cy="178.5" r="9.7" fill="#999999" fill-opacity="0.82"/>
<rect x="126.0" y="174.0" width="16.4" height="8.8" rx="2.4" fill="#fff" fill-opacity="0.88"/>
<text x="134.2" y="181.6" text-anchor="middle" font-size="8.3" font-weight="bold" fill="#2b2b2b" fill-opacity="0.92">N/A</text>
<circle cx="166.6" cy="173.5" r="9.7" fill="#ff0000" fill-opacity="0.76"/>
<rect x="158.4" y="169.0" width="16.4" height="8.8" rx="2.4" fill="#fff" fill-opacity="0.88"/>
<text x="166.6" y="176.6" text-anchor="middle" font-size="8.3" font-weight="bold" fill="#2b2b2b" fill-opacity="0.92">153</text>
<circle cx="180.6" cy="191.7" r="9.7" fill="#ff0000" fill-opacity="0.76"/>
<rect x="172.4" y="187.2" width="16.4" height="8.8" rx="2.4" fill="#fff" fill-opacity="0.88"/>
<text x="180.6" y="194.8" text-anchor="middle" font-size="8.3" font-weight="bold" fill="#2b2b2b" fill-opacity="0.92">155</text>
<circle cx="174.7" cy="210.8" r="9.7" fill="#999999" fill-opacity="0.82"/>
<rect x="166.5" y="206.3" width="16.4" height="8.8" rx="2.4" fill="#fff" fill-opacity="0.88"/>
<text x="174.7" y="213.9" text-anchor="middle" font-size="8.3" font-weight="bold" fill="#2b2b2b" fill-opacity="0.92">N/A</text>
<circle cx="189.5" cy="204.8" r="9.7" fill="#ff0000" fill-opacity="0.76"/>
<rect x="181.3" y="200.3" width="16.4" height="8.8" rx="2.4" fill="#fff" fill-opacity="0.88"/>
<text x="189.5" y="207.9" text-anchor="middle" font-size="8.3" font-weight="bold" fill="#2b2b2b" fill-opacity="0.92">155</text>
<circle cx="204.9" cy="211.9" r="9.7" fill="#ff7e00" fill-opacity="0.76"/>
<rect x="196.7" y="207.4" width="16.4" height="8.8" rx="2.4" fill="#fff" fill-opacity="0.88"/>
<text x="204.9" y="214.9" text-anchor="middle" font-size="8.3" font-weight="bold" fill="#2b2b2b" fill-opacity="0.92">104</text>
<circle cx="208.6" cy="208.3" r="9.7" fill="#ff7e00" fill-opacity="0.76"/>
<rect x="200.4" y="203.8" width="16.4" height="8.8" rx="2.4" fill="#fff" fill-opacity="0.88"/>
<text x="208.6" y="211.4" text-anchor="middle" font-size="8.3" font-weight="bold" fill="#2b2b2b" fill-opacity="0.92">130</text>
<circle cx="146.4" cy="224.2" r="9.7" fill="#999999" fill-opacity="0.82"/>
<rect x="138.2" y="219.7" width="16.4" height="8.8" rx="2.4" fill="#fff" fill-opacity="0.88"/>
<text x="146.4" y="227.2" text-anchor="middle" font-size="8.3" font-weight="bold" fill="#2b2b2b" fill-opacity="0.92">N/A</text>
<circle cx="120.5" cy="248.0" r="9.7" fill="#ffff00" fill-opacity="0.76"/>
<rect x="114.6" y="243.5" width="11.8" height="8.8" rx="2.4" fill="#fff" fill-opacity="0.88"/>
<text x="120.5" y="251.1" text-anchor="middle" font-size="8.3" font-weight="bold" fill="#2b2b2b" fill-opacity="0.92">98</text>
<circle cx="55.0" cy="260.7" r="9.7" fill="#ffff00" fill-opacity="0.76"/>
<rect x="49.1" y="256.2" width="11.8" height="8.8" rx="2.4" fill="#fff" fill-opacity="0.88"/>
<text x="55.0" y="263.8" text-anchor="middle" font-size="8.3" font-weight="bold" fill="#2b2b2b" fill-opacity="0.92">99</text>
<circle cx="145.0" cy="274.0" r="9.7" fill="#ffff00" fill-opacity="0.76"/>
<circle cx="261.0" cy="135.3" r="9.7" fill="#999999" fill-opacity="0.82"/>
<rect x="252.8" y="130.8" width="16.4" height="8.8" rx="2.4" fill="#fff" fill-opacity="0.88"/>
<text x="261.0" y="138.4" text-anchor="middle" font-size="8.3" font-weight="bold" fill="#2b2b2b" fill-opacity="0.92">N/A</text>
<circle cx="280.1" cy="128.5" r="9.7" fill="#99004c" fill-opacity="0.76"/>
<rect x="271.9" y="124.0" width="16.4" height="8.8" rx="2.4" fill="#fff" fill-opacity="0.88"/>
<text x="280.1" y="131.6" text-anchor="middle" font-size="8.3" font-weight="bold" fill="#2b2b2b" fill-opacity="0.92">253</text>
<circle cx="290.1" cy="126.4" r="9.7" fill="#99004c" fill-opacity="0.76"/>
<rect x="281.9" y="121.9" width="16.4" height="8.8" rx="2.4" fill="#fff" fill-opacity="0.88"/>
<text x="290.1" y="129.5" text-anchor="middle" font-size="8.3" font-weight="bold" fill="#2b2b2b" fill-opacity="0.92">263</text>
<circle cx="259.1" cy="149.5" r="9.7" fill="#ff7e00" fill-opacity="0.76"/>
<rect x="250.9" y="145.0" width="16.4" height="8.8" rx="2.4" fill="#fff" fill-opacity="0.88"/>
<text x="259.1" y="152.6" text-anchor="middle" font-size="8.3" font-weight="bold" fill="#2b2b2b" fill-opacity="0.92">132</text>
<circle cx="259.7" cy="168.4" r="9.7" fill="#999999" fill-opacity="0.82"/>
<rect x="251.5" y="163.9" width="16.4" height="8.8" rx="2.4" fill="#fff" fill-opacity="0.88"/>
<text x="259.7" y="171.5" text-anchor="middle" font-size="8.3" font-weight="bold" fill="#2b2b2b" fill-opacity="0.92">N/A</text>
<circle cx="268.3" cy="169.2" r="9.7" fill="#4c0026" fill-opacity="0.76"/>
<rect x="260.1" y="164.7" width="16.4" height="8.8" rx="2.4" fill="#fff" fill-opacity="0.88"/>
<text x="268.3" y="172.2" text-anchor="middle" font-size="8.3" font-weight="bold" fill="#2b2b2b" fill-opacity="0.92">431</text>
<circle cx="275.6" cy="170.9" r="9.7" fill="#ff0000" fill-opacity="0.76"/>
<rect x="267.4" y="166.4" width="16.4" height="8.8" rx="2.4" fill="#fff" fill-opacity="0.88"/>
<text x="275.6" y="174.0" text-anchor="middle" font-size="8.3" font-weight="bold" fill="#2b2b2b" fill-opacity="0.92">173</text>
<circle cx="291.4" cy="194.1" r="9.7" fill="#4c0026" fill-opacity="0.76"/>
<rect x="283.2" y="189.6" width="16.4" height="8.8" rx="2.4" fill="#fff" fill-opacity="0.88"/>
<text x="291.4" y="197.2" text-anchor="middle" font-size="8.3" font-weight="bold" fill="#2b2b2b" fill-opacity="0.92">356</text>
<circle cx="280.1" cy="182.5" r="9.7" fill="#ff0000" fill-opacity="0.76"/>
<rect x="271.9" y="178.0" width="16.4" height="8.8" rx="2.4" fill="#fff" fill-opacity="0.88"/>
<text x="280.1" y="185.6" text-anchor="middle" font-size="8.3" font-weight="bold" fill="#2b2b2b" fill-opacity="0.92">186</text>
<circle cx="322.2" cy="198.3" r="9.7" fill="#ff0000" fill-opacity="0.76"/>
<rect x="314.0" y="193.8" width="16.4" height="8.8" rx="2.4" fill="#fff" fill-opacity="0.88"/>
<text x="322.2" y="201.4" text-anchor="middle" font-size="8.3" font-weight="bold" fill="#2b2b2b" fill-opacity="0.92">155</text>
<circle cx="252.6" cy="210.3" r="9.7" fill="#ff7e00" fill-opacity="0.76"/>
<rect x="244.4" y="205.8" width="16.4" height="8.8" rx="2.4" fill="#fff" fill-opacity="0.88"/>
<text x="252.6" y="213.4" text-anchor="middle" font-size="8.3" font-weight="bold" fill="#2b2b2b" fill-opacity="0.92">135</text>
<circle cx="333.5" cy="219.7" r="9.7" fill="#999999" fill-opacity="0.82"/>
<rect x="325.3" y="215.2" width="16.4" height="8.8" rx="2.4" fill="#fff" fill-opacity="0.88"/>
<text x="333.5" y="222.8" text-anchor="middle" font-size="8.3" font-weight="bold" fill="#2b2b2b" fill-opacity="0.92">N/A</text>
<circle cx="341.6" cy="214.5" r="9.7" fill="#99004c" fill-opacity="0.76"/>
<rect x="333.4" y="210.0" width="16.4" height="8.8" rx="2.4" fill="#fff" fill-opacity="0.88"/>
<text x="341.6" y="217.6" text-anchor="middle" font-size="8.3" font-weight="bold" fill="#2b2b2b" fill-opacity="0.92">275</text>
<circle cx="275.0" cy="234.2" r="9.7" fill="#ff7e00" fill-opacity="0.76"/>
<rect x="266.8" y="229.7" width="16.4" height="8.8" rx="2.4" fill="#fff" fill-opacity="0.88"/>
<text x="275.0" y="237.2" text-anchor="middle" font-size="8.3" font-weight="bold" fill="#2b2b2b" fill-opacity="0.92">134</text>
<circle cx="296.3" cy="240.7" r="9.7" fill="#ff7e00" fill-opacity="0.76"/>
<rect x="288.1" y="236.2" width="16.4" height="8.8" rx="2.4" fill="#fff" fill-opacity="0.88"/>
<text x="296.3" y="243.8" text-anchor="middle" font-size="8.3" font-weight="bold" fill="#2b2b2b" fill-opacity="0.92">126</text>
<circle cx="303.4" cy="256.9" r="9.7" fill="#ff7e00" fill-opacity="0.76"/>
<rect x="295.2" y="252.4" width="16.4" height="8.8" rx="2.4" fill="#fff" fill-opacity="0.88"/>
<text x="303.4" y="259.9" text-anchor="middle" font-size="8.3" font-weight="bold" fill="#2b2b2b" fill-opacity="0.92">145</text>
<circle cx="362.9" cy="243.1" r="9.7" fill="#ff7e00" fill-opacity="0.76"/>
<rect x="354.7" y="238.6" width="16.4" height="8.8" rx="2.4" fill="#fff" fill-opacity="0.88"/>
<text x="362.9" y="246.2" text-anchor="middle" font-size="8.3" font-weight="bold" fill="#2b2b2b" fill-opacity="0.92">117</text>
<circle cx="388.3" cy="239.1" r="9.7" fill="#999999" fill-opacity="0.82"/>
<rect x="380.1" y="234.6" width="16.4" height="8.8" rx="2.4" fill="#fff" fill-opacity="0.88"/>
<text x="388.3" y="242.2" text-anchor="middle" font-size="8.3" font-weight="bold" fill="#2b2b2b" fill-opacity="0.92">N/A</text>
<circle cx="400.5" cy="226.1" r="9.7" fill="#ff0000" fill-opacity="0.76"/>
<rect x="392.3" y="221.6" width="16.4" height="8.8" rx="2.4" fill="#fff" fill-opacity="0.88"/>
<text x="400.5" y="229.2" text-anchor="middle" font-size="8.3" font-weight="bold" fill="#2b2b2b" fill-opacity="0.92">157</text>
<circle cx="428.4" cy="218.1" r="9.7" fill="#ff7e00" fill-opacity="0.76"/>
<rect x="420.2" y="213.6" width="16.4" height="8.8" rx="2.4" fill="#fff" fill-opacity="0.88"/>
<text x="428.4" y="221.2" text-anchor="middle" font-size="8.3" font-weight="bold" fill="#2b2b2b" fill-opacity="0.92">147</text>
<circle cx="403.0" cy="266.0" r="9.7" fill="#ffff00" fill-opacity="0.76"/>
<rect x="397.1" y="261.5" width="11.8" height="8.8" rx="2.4" fill="#fff" fill-opacity="0.88"/>
<text x="403.0" y="269.1" text-anchor="middle" font-size="8.3" font-weight="bold" fill="#2b2b2b" fill-opacity="0.92">85</text>
<circle cx="404.2" cy="101.0" r="9.7" fill="#ff0000" fill-opacity="0.76"/>
<rect x="396.0" y="96.5" width="16.4" height="8.8" rx="2.4" fill="#fff" fill-opacity="0.88"/>
<text x="404.2" y="104.0" text-anchor="middle" font-size="8.3" font-weight="bold" fill="#2b2b2b" fill-opacity="0.92">183</text>
<circle cx="440.3" cy="142.8" r="9.7" fill="#ffff00" fill-opacity="0.76"/>
<rect x="434.4" y="138.3" width="11.8" height="8.8" rx="2.4" fill="#fff" fill-opacity="0.88"/>
<text x="440.3" y="145.9" text-anchor="middle" font-size="8.3" font-weight="bold" fill="#2b2b2b" fill-opacity="0.92">70</text>
<circle cx="467.2" cy="134.0" r="9.7" fill="#ffff00" fill-opacity="0.76"/>
<rect x="461.3" y="129.5" width="11.8" height="8.8" rx="2.4" fill="#fff" fill-opacity="0.88"/>
<text x="467.2" y="137.1" text-anchor="middle" font-size="8.3" font-weight="bold" fill="#2b2b2b" fill-opacity="0.92">93</text>
<circle cx="459.6" cy="183.2" r="9.7" fill="#ff7e00" fill-opacity="0.76"/>
<rect x="451.4" y="178.7" width="16.4" height="8.8" rx="2.4" fill="#fff" fill-opacity="0.88"/>
<text x="459.6" y="186.2" text-anchor="middle" font-size="8.3" font-weight="bold" fill="#2b2b2b" fill-opacity="0.92">141</text>
<defs><filter id="sh" x="-20%" y="-20%" width="140%" height="150%"><feGaussianBlur in="SourceAlpha" stdDeviation="2.2"/><feOffset dy="1.5"/><feComponentTransfer><feFuncA type="linear" slope="0.38"/></feComponentTransfer><feMerge><feMergeNode/><feMergeNode in="SourceGraphic"/></feMerge></filter></defs>
<path filter="url(#sh)" fill="#fff" d="M255.5 22.599999999999994 H347.7 Q355.2 22.599999999999994 355.2 30.099999999999994 V104.0 Q355.2 111.5 347.7 111.5 H287.3 L280.8 117.80000000000001 L274.3 111.5 H255.5 Q248.0 111.5 248.0 104.0 V30.099999999999994 Q248.0 22.599999999999994 255.5 22.599999999999994 Z"/>
<g font-size="9.33" fill="#2a2a2a" text-anchor="middle"><text x="301.6" y="41.0">Bishkek</text><text x="301.6" y="51.1">2021-01-17 7:00 PM</text><text x="301.6" y="61.0">(LT)</text></g>
<rect x="258.1" y="63.2" width="86.7" height="38.4" fill="#00467f"/>
<rect x="258.9" y="81.3" width="54.7" height="19.5" fill="#fff"/>
<rect x="313.6" y="81.3" width="30.4" height="19.5" fill="#99004c"/>
<g font-size="9.33" text-anchor="middle" font-weight="bold" fill="#fff"><text x="286.2" y="74.9">Pollutant</text><text x="329.4" y="74.9">AQI</text><text x="329.4" y="93.8">250</text></g>
<text x="286.2" y="93.8" font-size="9.33" text-anchor="middle" fill="#333">PM2.5</text>
</svg>
</div>

<div class="abs sbh" style="top:7.2px">Select a City</div>
<div class="abs sel" style="top:32.2px">Bishkek<span class="x">×</span><span class="ar"></span></div>
<div class="abs sbh" style="top:70.7px">Select a Parameter</div>
<div class="abs sel" style="top:95.5px;line-height:20.6px">PM2.5<span class="x">×</span><span class="ar"></span></div>
<div id="citybox" class="abs"><b>Bishkek</b></div>
<svg id="rss" class="abs" viewBox="0 0 23 23">
  <rect width="23" height="23" fill="#f5b53f"/>
  <circle cx="6.4" cy="17" r="2.1" fill="#fff"/>
  <path d="M4.3 10.2 a8.6 8.6 0 0 1 8.6 8.6" fill="none" stroke="#fff" stroke-width="2.6"/>
  <path d="M4.3 5 a13.8 13.8 0 0 1 13.8 13.8" fill="none" stroke="#fff" stroke-width="2.6"/>
</svg>
<div id="note" class="abs">Note: Values above 500 are considered Beyond the AQI. Follow<br>recommendations for the Hazardous category. Additional information<br>on reducing exposure to extremely high levels of particle pollution is<br>available <a>here</a>.</div>

<div id="tab1" class="abs tab">AQI</div>
<div id="tab2" class="abs tab">Concentration</div>
<div id="tab3" class="abs tab">Historical</div>
<div id="tabline" class="abs"></div>
<div id="learn" class="abs">Learn more about how the Air Quality Index [AQI] is calculated from the EPA <a>here</a>.</div>

<div id="chart" class="abs">
<svg class="abs" style="left:0;top:0" width="534" height="199" viewBox="0 0 534 199" font-family="Liberation Sans, sans-serif">
<text x="267" y="15.9" text-anchor="middle" font-size="12" letter-spacing="0.45" fill="#333">Bishkek – PM2.5</text>
<rect x="50.60" y="163.05" width="476.76" height="0.7" fill="#c0d0e0"/>
<text x="39.8" y="165.60" text-anchor="end" font-size="7.3" letter-spacing="0.15" fill="#1c1c1c" stroke="#1c1c1c" stroke-width="0.15">0</text>
<rect x="50.60" y="138.55" width="476.76" height="0.7" fill="#e4e4e4"/>
<text x="39.8" y="141.10" text-anchor="end" font-size="7.3" letter-spacing="0.15" fill="#1c1c1c" stroke="#1c1c1c" stroke-width="0.15">100</text>
<rect x="50.60" y="114.05" width="476.76" height="0.7" fill="#e4e4e4"/>
<text x="39.8" y="116.60" text-anchor="end" font-size="7.3" letter-spacing="0.15" fill="#1c1c1c" stroke="#1c1c1c" stroke-width="0.15">200</text>
<rect x="50.60" y="89.55" width="476.76" height="0.7" fill="#e4e4e4"/>
<text x="39.8" y="92.10" text-anchor="end" font-size="7.3" letter-spacing="0.15" fill="#1c1c1c" stroke="#1c1c1c" stroke-width="0.15">300</text>
<rect x="50.60" y="65.05" width="476.76" height="0.7" fill="#e4e4e4"/>
<text x="39.8" y="67.60" text-anchor="end" font-size="7.3" letter-spacing="0.15" fill="#1c1c1c" stroke="#1c1c1c" stroke-width="0.15">400</text>
<rect x="50.60" y="40.55" width="476.76" height="0.7" fill="#e4e4e4"/>
<text x="39.8" y="43.10" text-anchor="end" font-size="7.3" letter-spacing="0.15" fill="#1c1c1c" stroke="#1c1c1c" stroke-width="0.15">500</text>
<text transform="translate(19.7,99.3) rotate(-90)" text-anchor="middle" font-size="7.9" fill="#1c1c1c" stroke="#1c1c1c" stroke-width="0.15">AQI</text>
<rect x="55.53" y="84.75" width="10" height="78.64" fill="#4c0026" stroke="#2a2a2a" stroke-opacity="0.85" stroke-width="0.9"/>
<rect x="49.85" y="163.40" width="0.7" height="6.7" fill="#c0d0e0"/>
<text transform="translate(62.53,173.80) rotate(-45)" text-anchor="end" font-size="7.33" fill="#666">8 PM</text>
<rect x="75.40" y="115.38" width="10" height="48.02" fill="#ff0000" stroke="#2a2a2a" stroke-opacity="0.85" stroke-width="0.9"/>
<rect x="69.71" y="163.40" width="0.7" height="6.7" fill="#c0d0e0"/>
<text transform="translate(82.40,173.80) rotate(-45)" text-anchor="end" font-size="7.33" fill="#666">9 PM</text>
<rect x="95.26" y="123.22" width="10" height="40.18" fill="#ff0000" stroke="#2a2a2a" stroke-opacity="0.85" stroke-width="0.9"/>
<rect x="89.58" y="163.40" width="0.7" height="6.7" fill="#c0d0e0"/>
<text transform="translate(102.26,173.80) rotate(-45)" text-anchor="end" font-size="7.33" fill="#666">10 PM</text>
<rect x="115.13" y="126.40" width="10" height="36.99" fill="#ff0000" stroke="#2a2a2a" stroke-opacity="0.85" stroke-width="0.9"/>
<rect x="109.44" y="163.40" width="0.7" height="6.7" fill="#c0d0e0"/>
<text transform="translate(122.13,173.80) rotate(-45)" text-anchor="end" font-size="7.33" fill="#666">11 PM</text>
<rect x="134.99" y="138.65" width="10" height="24.75" fill="#ff7e00" stroke="#2a2a2a" stroke-opacity="0.85" stroke-width="0.9"/>
<rect x="129.31" y="163.40" width="0.7" height="6.7" fill="#c0d0e0"/>
<text transform="translate(141.99,173.80) rotate(-45)" text-anchor="end" font-size="7.33" fill="#666">Jan 18 2021 12 AM</text>
<rect x="154.86" y="146.00" width="10" height="17.39" fill="#ffff00" stroke="#2a2a2a" stroke-opacity="0.85" stroke-width="0.9"/>
<rect x="149.17" y="163.40" width="0.7" height="6.7" fill="#c0d0e0"/>
<text transform="translate(161.86,173.80) rotate(-45)" text-anchor="end" font-size="7.33" fill="#666">1 AM</text>
<rect x="174.72" y="150.66" width="10" height="12.74" fill="#ffff00" stroke="#2a2a2a" stroke-opacity="0.85" stroke-width="0.9"/>
<rect x="169.04" y="163.40" width="0.7" height="6.7" fill="#c0d0e0"/>
<text transform="translate(181.72,173.80) rotate(-45)" text-anchor="end" font-size="7.33" fill="#666">2 AM</text>
<rect x="194.59" y="155.31" width="10" height="8.08" fill="#00e400" stroke="#2a2a2a" stroke-opacity="0.85" stroke-width="0.9"/>
<rect x="188.90" y="163.40" width="0.7" height="6.7" fill="#c0d0e0"/>
<text transform="translate(201.59,173.80) rotate(-45)" text-anchor="end" font-size="7.33" fill="#666">3 AM</text>
<rect x="214.45" y="158.99" width="10" height="4.41" fill="#00e400" stroke="#2a2a2a" stroke-opacity="0.85" stroke-width="0.9"/>
<rect x="208.77" y="163.40" width="0.7" height="6.7" fill="#c0d0e0"/>
<text transform="translate(221.45,173.80) rotate(-45)" text-anchor="end" font-size="7.33" fill="#666">4 AM</text>
<rect x="234.32" y="160.95" width="10" height="2.45" fill="#00e400" stroke="#2a2a2a" stroke-opacity="0.85" stroke-width="0.9"/>
<rect x="228.63" y="163.40" width="0.7" height="6.7" fill="#c0d0e0"/>
<text transform="translate(241.32,173.80) rotate(-45)" text-anchor="end" font-size="7.33" fill="#666">5 AM</text>
<rect x="254.18" y="160.95" width="10" height="2.45" fill="#00e400" stroke="#2a2a2a" stroke-opacity="0.85" stroke-width="0.9"/>
<rect x="248.50" y="163.40" width="0.7" height="6.7" fill="#c0d0e0"/>
<text transform="translate(261.18,173.80) rotate(-45)" text-anchor="end" font-size="7.33" fill="#666">6 AM</text>
<rect x="274.05" y="158.99" width="10" height="4.41" fill="#00e400" stroke="#2a2a2a" stroke-opacity="0.85" stroke-width="0.9"/>
<rect x="268.37" y="163.40" width="0.7" height="6.7" fill="#c0d0e0"/>
<text transform="translate(281.05,173.80) rotate(-45)" text-anchor="end" font-size="7.33" fill="#666">7 AM</text>
<rect x="293.91" y="152.86" width="10" height="10.54" fill="#00e400" stroke="#2a2a2a" stroke-opacity="0.85" stroke-width="0.9"/>
<rect x="288.23" y="163.40" width="0.7" height="6.7" fill="#c0d0e0"/>
<text transform="translate(300.91,173.80) rotate(-45)" text-anchor="end" font-size="7.33" fill="#666">8 AM</text>
<rect x="313.78" y="146.00" width="10" height="17.39" fill="#ffff00" stroke="#2a2a2a" stroke-opacity="0.85" stroke-width="0.9"/>
<rect x="308.10" y="163.40" width="0.7" height="6.7" fill="#c0d0e0"/>
<text transform="translate(320.78,173.80) rotate(-45)" text-anchor="end" font-size="7.33" fill="#666">9 AM</text>
<rect x="333.64" y="144.78" width="10" height="18.62" fill="#ffff00" stroke="#2a2a2a" stroke-opacity="0.85" stroke-width="0.9"/>
<rect x="327.96" y="163.40" width="0.7" height="6.7" fill="#c0d0e0"/>
<text transform="translate(340.64,173.80) rotate(-45)" text-anchor="end" font-size="7.33" fill="#666">10 AM</text>
<rect x="353.51" y="146.74" width="10" height="16.66" fill="#ffff00" stroke="#2a2a2a" stroke-opacity="0.85" stroke-width="0.9"/>
<rect x="347.82" y="163.40" width="0.7" height="6.7" fill="#c0d0e0"/>
<text transform="translate(360.51,173.80) rotate(-45)" text-anchor="end" font-size="7.33" fill="#666">11 AM</text>
<rect x="373.37" y="146.98" width="10" height="16.41" fill="#ffff00" stroke="#2a2a2a" stroke-opacity="0.85" stroke-width="0.9"/>
<rect x="367.69" y="163.40" width="0.7" height="6.7" fill="#c0d0e0"/>
<text transform="translate(380.37,173.80) rotate(-45)" text-anchor="end" font-size="7.33" fill="#666">12 PM</text>
<rect x="393.24" y="142.82" width="10" height="20.58" fill="#ffff00" stroke="#2a2a2a" stroke-opacity="0.85" stroke-width="0.9"/>
<rect x="387.55" y="163.40" width="0.7" height="6.7" fill="#c0d0e0"/>
<text transform="translate(400.24,173.80) rotate(-45)" text-anchor="end" font-size="7.33" fill="#666">1 PM</text>
<rect x="413.10" y="147.23" width="10" height="16.17" fill="#ffff00" stroke="#2a2a2a" stroke-opacity="0.85" stroke-width="0.9"/>
<rect x="407.42" y="163.40" width="0.7" height="6.7" fill="#c0d0e0"/>
<text transform="translate(420.10,173.80) rotate(-45)" text-anchor="end" font-size="7.33" fill="#666">2 PM</text>
<rect x="432.97" y="144.53" width="10" height="18.86" fill="#ffff00" stroke="#2a2a2a" stroke-opacity="0.85" stroke-width="0.9"/>
<rect x="427.28" y="163.40" width="0.7" height="6.7" fill="#c0d0e0"/>
<text transform="translate(439.97,173.80) rotate(-45)" text-anchor="end" font-size="7.33" fill="#666">3 PM</text>
<rect x="452.83" y="104.84" width="10" height="58.55" fill="#99004c" stroke="#2a2a2a" stroke-opacity="0.85" stroke-width="0.9"/>
<rect x="447.15" y="163.40" width="0.7" height="6.7" fill="#c0d0e0"/>
<text transform="translate(459.83,173.80) rotate(-45)" text-anchor="end" font-size="7.33" fill="#666">4 PM</text>
<rect x="472.70" y="92.84" width="10" height="70.56" fill="#99004c" stroke="#2a2a2a" stroke-opacity="0.85" stroke-width="0.9"/>
<rect x="467.01" y="163.40" width="0.7" height="6.7" fill="#c0d0e0"/>
<text transform="translate(479.70,173.80) rotate(-45)" text-anchor="end" font-size="7.33" fill="#666">5 PM</text>
<rect x="492.56" y="102.39" width="10" height="61.00" fill="#99004c" stroke="#2a2a2a" stroke-opacity="0.85" stroke-width="0.9"/>
<rect x="486.88" y="163.40" width="0.7" height="6.7" fill="#c0d0e0"/>
<text transform="translate(499.56,173.80) rotate(-45)" text-anchor="end" font-size="7.33" fill="#666">6 PM</text>
<rect x="512.43" y="102.15" width="10" height="61.25" fill="#99004c" stroke="#2a2a2a" stroke-opacity="0.85" stroke-width="0.9"/>
<rect x="506.75" y="163.40" width="0.7" height="6.7" fill="#c0d0e0"/>
<text transform="translate(519.43,173.80) rotate(-45)" text-anchor="end" font-size="7.33" fill="#666">7 PM</text>
<rect x="527.01" y="163.40" width="0.7" height="6.7" fill="#c0d0e0"/>
</svg>
</div>

<div id="cc" class="abs">
  <div class="h">
    <div style="font-size:10px;line-height:12px;padding-top:4px">Current Conditions</div>
    <div style="font-size:8px;line-height:12px;padding-top:3px">observed at</div>
    <div style="font-size:10px;line-height:12px;padding-top:1.4px">Jan 17, 2021 7:00 PM (LT)</div>
  </div>
  <div class="m">250 AQI<br>Very Unhealthy<br>PM2.5</div>
  <div class="hm">Health Message</div>
  <div class="tx">AQI values between 201 and 300 trigger a<br>health alert, meaning everyone may<br>experience more serious health effects.</div>
</div>
</body>
</html>
